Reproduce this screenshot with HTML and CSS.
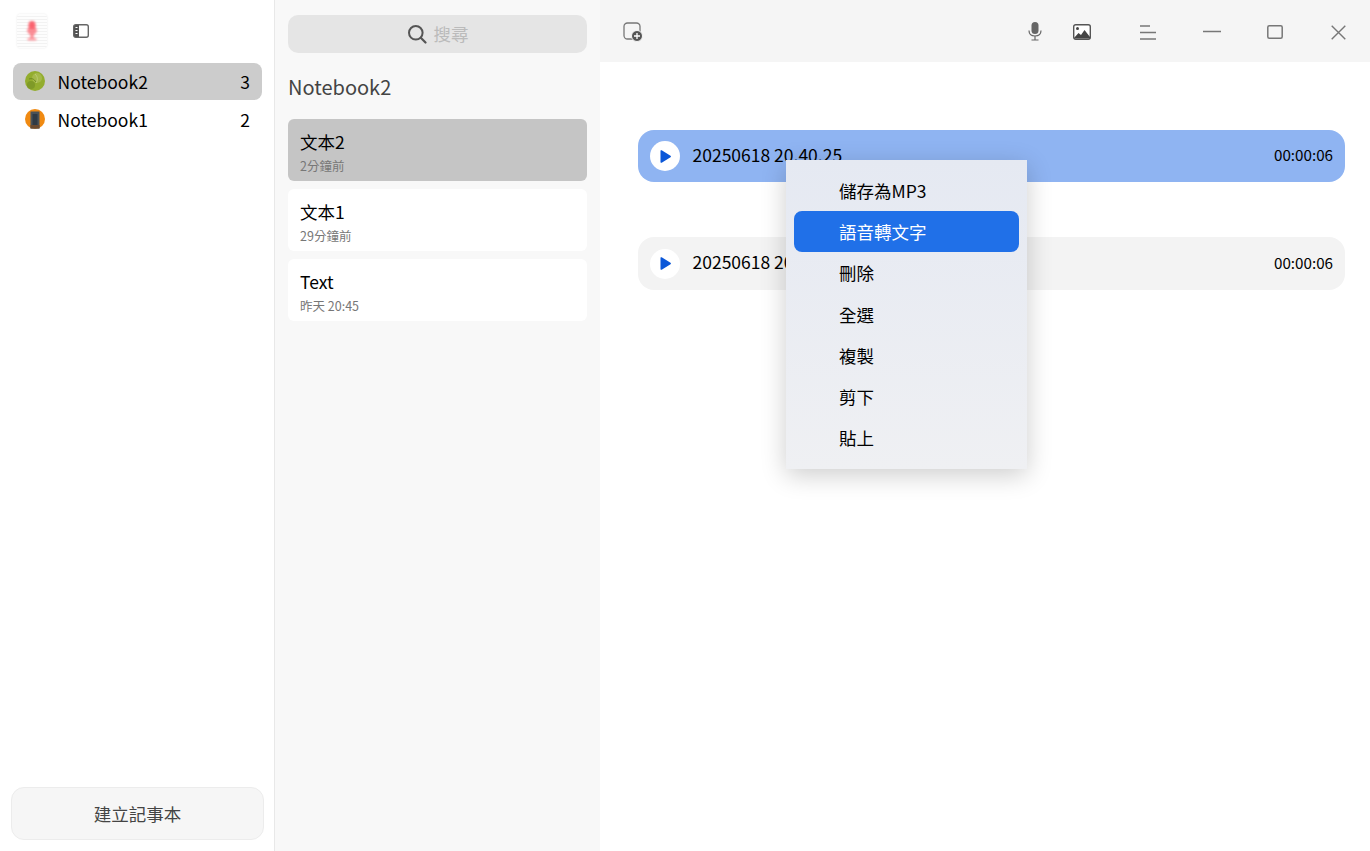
FILE: index.html
```html
<!DOCTYPE html>
<html lang="zh-Hant">
<head>
    <meta charset="UTF-8">
    <meta name="viewport" content="width=device-width, initial-scale=1.0">
    <title>Notebook2</title>
    <link rel="stylesheet" href="styles.css">
</head>
<body>
    <div class="app">
        <aside class="sidebar">
            <div class="side-top">
                <div class="app-logo">
                    <svg class="logo-mic" width="16" height="24" viewBox="0 0 16 24">
                        <rect x="4.500" y="2" width="7" height="11" rx="3.500" fill="#fb4a58"/>
                        <path d="M3 10c0 4 2.500 6 5 6s5-2 5-6" fill="#fb7a84"/>
                        <rect x="6.500" y="15" width="3" height="5" fill="#fb6f79"/>
                        <rect x="3.500" y="19" width="9" height="2.500" rx="1" fill="#fb8a92"/>
                    </svg>
                </div>
                <button class="icon-btn side-toggle">
                    <svg width="16" height="14" viewBox="0 0 16 14">
                        <rect x=".7" y=".7" width="14.600" height="12.600" rx="2" fill="#fff" stroke="#666" stroke-width="1.400"/>
                        <path d="M1 2.500a1.500 1.500 0 0 1 1.500-1.500H6v12H2.500A1.500 1.500 0 0 1 1 11.500z" fill="#555"/>
                        <path d="M2.500 3.500h2M2.500 6.500h2M2.500 9.500h2" stroke="#fff" stroke-width="1.200"/>
                    </svg>
                </button>
            </div>
            <ul class="books">
                <li class="book active">
                    <svg class="book-icon" viewBox="0 0 20 20">
                        <circle cx="10" cy="10" r="10" fill="#93ad2e"/>
                        <circle cx="12" cy="7" r="5" fill="#a5b94a"/>
                        <circle cx="6" cy="14" r="4" fill="#7f9a28"/>
                        <path d="M10 3c3 3 3 6 1 9" stroke="#bccd74" stroke-width="1" fill="none"/>
                        <path d="M4 8c3-1 5 0 7 3" stroke="#6f8a22" stroke-width="1" fill="none"/>
                    </svg>
                    <span class="book-name">Notebook2</span>
                    <span class="book-count">3</span>
                </li>
                <li class="book">
                    <svg class="book-icon" viewBox="0 0 20 20">
                        <circle cx="10" cy="10" r="10" fill="#f08a12"/>
                        <rect x="5.500" y="2.500" width="9" height="17" fill="#4a5258"/>
                        <rect x="7.500" y="5" width="5" height="12" fill="#2f3a44"/>
                        <rect x="5.500" y="16" width="9" height="3.500" fill="#6a4a30"/>
                    </svg>
                    <span class="book-name">Notebook1</span>
                    <span class="book-count">2</span>
                </li>
            </ul>
            <button class="new-book">建立記事本</button>
        </aside>

        <section class="notes">
            <div class="search">
                <svg width="20" height="20" viewBox="0 0 20 20">
                    <circle cx="8.800" cy="8.800" r="6.800" fill="none" stroke="#555" stroke-width="2"/>
                    <path d="M13.800 13.800l4.700 4.700" stroke="#555" stroke-width="2.200" stroke-linecap="round"/>
                </svg>
                <span class="search-text">搜尋</span>
            </div>
            <h2 class="notes-title">Notebook2</h2>
            <div class="note active">
                <div class="note-name">文本2</div>
                <div class="note-time">2分鐘前</div>
            </div>
            <div class="note">
                <div class="note-name">文本1</div>
                <div class="note-time">29分鐘前</div>
            </div>
            <div class="note">
                <div class="note-name">Text</div>
                <div class="note-time">昨天 20:45</div>
            </div>
        </section>

        <main class="editor">
            <header class="toolbar">
                <button class="icon-btn new-note">
                    <svg width="20" height="20" viewBox="0 0 20 20">
                        <rect x="1" y="1" width="16" height="16" rx="3.500" fill="none" stroke="#777" stroke-width="1.300"/>
                        <circle cx="14" cy="14" r="5.500" fill="#555" stroke="#f5f5f5" stroke-width="1"/>
                        <path d="M14 11v6M11 14h6" stroke="#fff" stroke-width="1.300"/>
                    </svg>
                </button>
                <div class="toolbar-right">
                    <button class="icon-btn mic">
                        <svg width="14" height="19" viewBox="0 0 14 19">
                            <rect x="3.500" y="0" width="7" height="12" rx="3.500" fill="#666"/>
                            <path d="M1 8.500c0 3.500 2.500 5.500 6 5.500s6-2 6-5.500M7 14v3.500M3.500 18h7" fill="none" stroke="#666" stroke-width="1.200"/>
                        </svg>
                    </button>
                    <button class="icon-btn picture">
                        <svg width="18" height="16" viewBox="0 0 18 16">
                            <rect x=".7" y=".7" width="16.600" height="14.600" rx="2" fill="#fff" stroke="#555" stroke-width="1.400"/>
                            <circle cx="4.500" cy="4.500" r="1.500" fill="#444"/>
                            <path d="M1 14l4.500-5 2.500 2 3.500-5 5.500 7v1.500H1z" fill="#444"/>
                        </svg>
                    </button>
                    <button class="icon-btn menu-btn">
                        <svg width="16" height="15" viewBox="0 0 16 15">
                            <path d="M0 1h10M0 7.500h16M0 14h16" stroke="#777" stroke-width="1.300"/>
                        </svg>
                    </button>
                    <button class="icon-btn win-min">
                        <svg width="18" height="3" viewBox="0 0 18 3">
                            <path d="M0 1.500h18" stroke="#777" stroke-width="1.500"/>
                        </svg>
                    </button>
                    <button class="icon-btn win-max">
                        <svg width="16" height="14" viewBox="0 0 16 14">
                            <rect x=".8" y=".8" width="14.400" height="12.400" rx="1.500" fill="none" stroke="#777" stroke-width="1.500"/>
                        </svg>
                    </button>
                    <button class="icon-btn win-close">
                        <svg width="15" height="15" viewBox="0 0 15 15">
                            <path d="M.7.700l13.600 13.600M14.300.700L.7 14.300" stroke="#777" stroke-width="1.400"/>
                        </svg>
                    </button>
                </div>
            </header>
            <div class="records">
                <div class="record selected">
                    <span class="play"><svg width="11" height="13" viewBox="0 0 11 13"><path d="M.5 1v11a.8.8 0 0 0 1.200.7l8.800-5.500a.8.800 0 0 0 0-1.400L1.700.3A.8.800 0 0 0 .5 1z" fill="#0b57d8"/></svg></span>
                    <span class="record-name">20250618 20.40.25</span>
                    <span class="record-time">00:00:06</span>
                </div>
                <div class="record">
                    <span class="play"><svg width="11" height="13" viewBox="0 0 11 13"><path d="M.5 1v11a.8.8 0 0 0 1.200.7l8.800-5.500a.8.800 0 0 0 0-1.400L1.700.3A.8.800 0 0 0 .5 1z" fill="#0b57d8"/></svg></span>
                    <span class="record-name">20250618 20.12.08</span>
                    <span class="record-time">00:00:06</span>
                </div>
            </div>
        </main>
    </div>

    <div class="context-menu">
        <div class="menu-item">儲存為MP3</div>
        <div class="menu-item hover">語音轉文字</div>
        <div class="menu-item">刪除</div>
        <div class="menu-item">全選</div>
        <div class="menu-item">複製</div>
        <div class="menu-item">剪下</div>
        <div class="menu-item">貼上</div>
    </div>
</body>
</html>
```

FILE: styles.css
```css
* {
    box-sizing: border-box;
}
html, body {
    margin: 0;
    padding: 0;
    height: 100%;
    overflow: hidden;
}
body {
    font-family: "Noto Sans CJK TC", "Noto Sans", sans-serif;
    color: #000;
    background-color: #fff;
}
button {
    font-family: inherit;
    border: none;
    background: none;
    padding: 0;
}
.app {
    display: flex;
    height: 851px;
}
.icon-btn {
    display: flex;
    align-items: center;
    justify-content: center;
}

/* left column */
.sidebar {
    width: 275px;
    flex-shrink: 0;
    display: flex;
    flex-direction: column;
    padding: 0 10px 11px 11px;
    border-right: 1px solid #e8e8e8;
    background-color: #fff;
}
.side-top {
    height: 63px;
    display: flex;
    align-items: center;
    padding: 0 0 1px 6px;
}
.app-logo {
    width: 30px;
    height: 34px;
    display: flex;
    align-items: center;
    justify-content: center;
    border-radius: 4px;
    background: repeating-linear-gradient(#fdfdfd 0 2px, #f2f2f2 2px 3px);
    box-shadow: 0 0 2px rgba(0,0,0,0.1);
}
.logo-mic {
    filter: blur(1.2px);
    opacity: 0.85;
}
.side-toggle {
    margin-left: 26px;
}
.books {
    list-style: none;
    margin: 0;
    padding: 0 2px 0 2px;
    flex: 1;
}
.book {
    height: 37px;
    display: flex;
    align-items: center;
    padding: 0 12px 0 12px;
    border-radius: 8px;
    font-size: 17.500px;
}
.book + .book {
    padding-top: 2px;
}
.book.active {
    background-color: #cccccc;
}
.book-icon {
    width: 20px;
    height: 20px;
    margin: -1px 12.500px 0 0;
}
.book-name {
    flex: 1;
}
.new-book {
    height: 53px;
    border: 1px solid #ececec;
    border-radius: 13px;
    background-color: #f6f6f6;
    font-size: 17.500px;
    color: #444;
}

/* note list */
.notes {
    width: 325px;
    flex-shrink: 0;
    padding: 15px 13px 0 13px;
    background-color: #f8f8f8;
}
.search {
    height: 38px;
    display: flex;
    align-items: center;
    justify-content: center;
    gap: 7px;
    border-radius: 10px;
    background-color: #e5e5e5;
    font-size: 17.500px;
    color: #bbb;
}
.search svg {
    margin-top: -1px;
}
.search-text {
    margin-top: -2px;
}
.notes-title {
    margin: 19px 0 17px 0;
    font-size: 20px;
    font-weight: 400;
    line-height: 30px;
    color: #444;
}
.note {
    height: 62px;
    margin-bottom: 8px;
    padding: 10px 12px 0 12px;
    border-radius: 6px;
    background-color: #fff;
}
.note.active {
    background-color: #c5c5c5;
}
.note-name {
    font-size: 17.500px;
    line-height: 25px;
}
.note-time {
    font-size: 12.500px;
    line-height: 23px;
    color: #777;
}

/* right side */
.editor {
    flex: 1;
    min-width: 0;
}
.toolbar {
    height: 62px;
    display: flex;
    align-items: center;
    justify-content: space-between;
    padding: 2px 0 0 23px;
    background-color: #f5f5f5;
}
.toolbar-right {
    display: flex;
    align-items: center;
    padding-right: 24px;
}
.mic {
    width: 16px;
    margin-top: -1px;
}
.picture {
    margin-left: 30px;
    margin-top: -1px;
}
.menu-btn {
    margin-left: 49px;
}
.win-min {
    margin-left: 47px;
    margin-top: -1px;
}
.win-max {
    margin-left: 46px;
}
.win-close {
    margin-left: 48px;
}
.records {
    padding: 68px 25px 0 38px;
}
.record {
    height: 53px;
    display: flex;
    align-items: center;
    margin-bottom: 55px;
    padding: 0 12px;
    border-radius: 16px;
    background-color: #f3f3f3;
    font-size: 17.500px;
}
.record.selected {
    height: 52px;
    background-color: #8fb4f2;
}
.play {
    width: 30px;
    height: 30px;
    display: flex;
    align-items: center;
    justify-content: center;
    margin-right: 12.500px;
    border-radius: 50%;
    background-color: #fff;
}
.record-name {
    flex: 1;
    margin-top: -3px;
}
.record + .record .record-name {
    margin-top: -5px;
}
.record-time {
    font-size: 15.200px;
    margin-top: -4px;
}

/* right click menu, floats over the recordings */
.context-menu {
    position: absolute;
    left: 786px;
    top: 160px;
    width: 241px;
    height: 309px;
    padding: 10px 8px 0 8px;
    background: linear-gradient(#e5e9f2, #eff0f3);
    box-shadow: 0 6px 24px rgba(0,0,0,0.2);
}
.menu-item {
    height: 41.200px;
    line-height: 41px;
    padding-left: 45px;
    border-radius: 8px;
    font-size: 17.500px;
}
.menu-item.hover {
    background-color: #2070e8;
    color: #fff;
}
```
